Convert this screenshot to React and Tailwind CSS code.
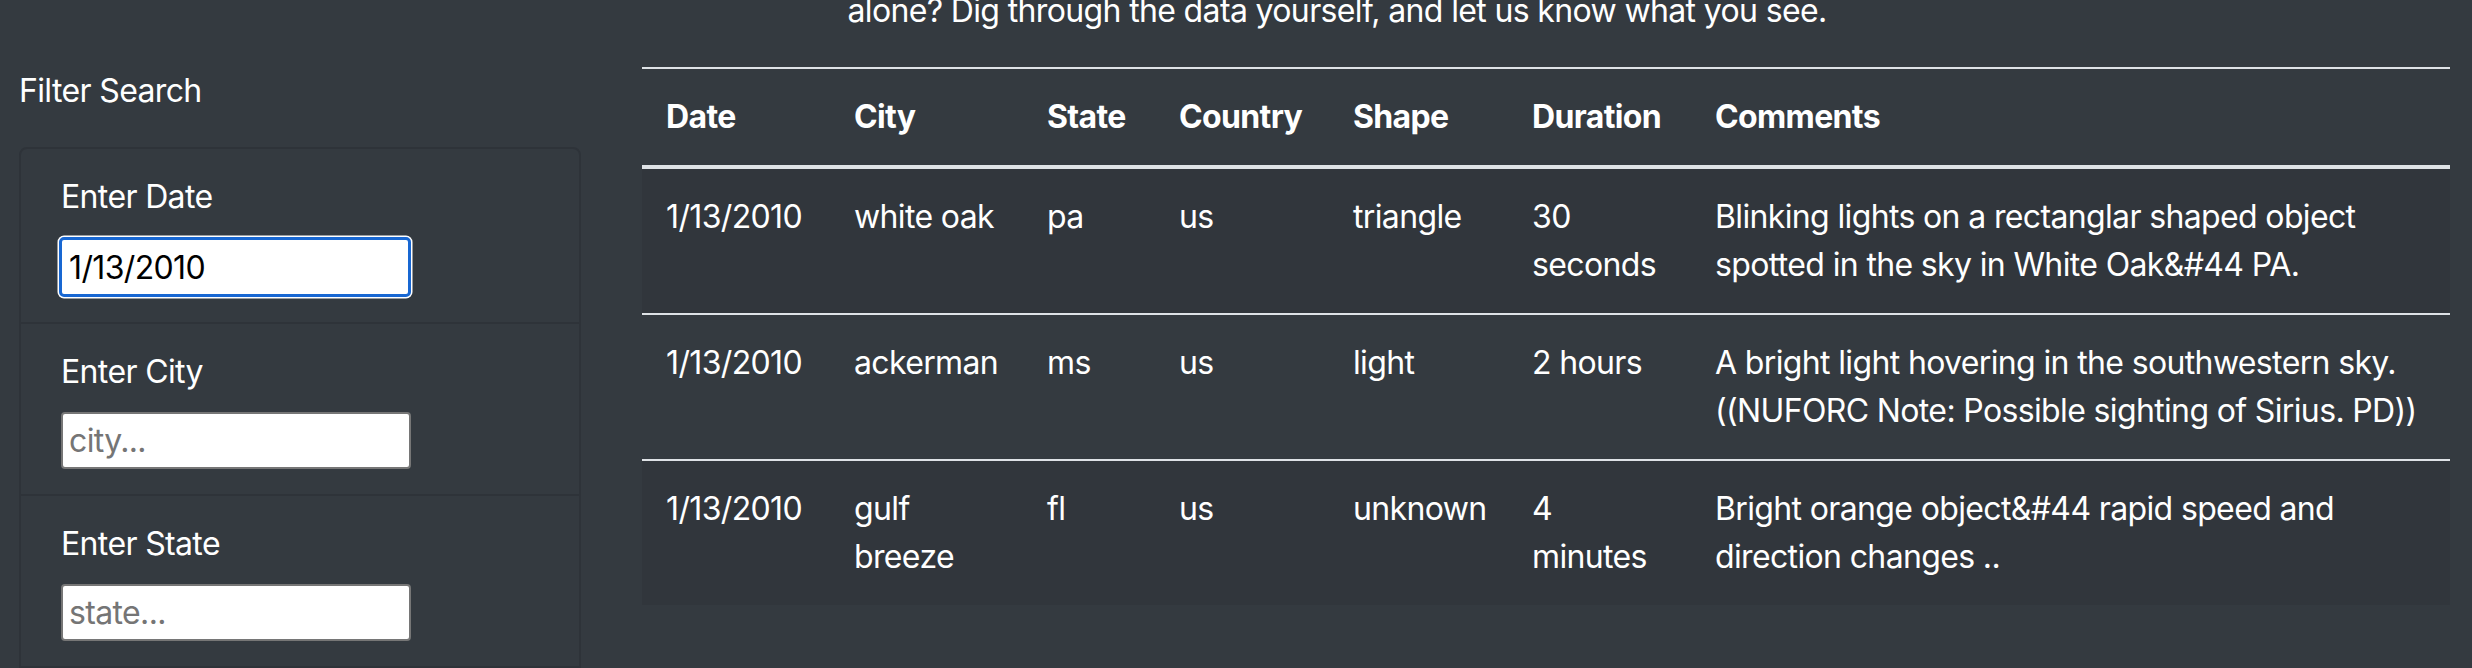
import React from 'react';

const rows = [
  {
    date: '1/13/2010',
    city: ['white oak'],
    state: 'pa',
    country: 'us',
    shape: 'triangle',
    duration: ['30', 'seconds'],
    comments: ['Blinking lights on a rectanglar shaped object', 'spotted in the sky in White Oak&#44 PA.'],
  },
  {
    date: '1/13/2010',
    city: ['ackerman'],
    state: 'ms',
    country: 'us',
    shape: 'light',
    duration: ['2 hours'],
    comments: ['A bright light hovering in the southwestern sky.', '((NUFORC Note: Possible sighting of Sirius. PD))'],
  },
  {
    date: '1/13/2010',
    city: ['gulf', 'breeze'],
    state: 'fl',
    country: 'us',
    shape: 'unknown',
    duration: ['4', 'minutes'],
    comments: ['Bright orange object&#44 rapid speed and', 'direction changes ..'],
  },
];

const filters = [
  { label: 'Enter Date', placeholder: 'date...', value: '1/13/2010', focused: true },
  { label: 'Enter City', placeholder: 'city...' },
  { label: 'Enter State', placeholder: 'state...' },
  { label: 'Enter Country', placeholder: 'country...' },
  { label: 'Enter Shape', placeholder: 'shape...' },
];

const Lines = ({ parts }) =>
  parts.map((p, i) => (
    <span key={i} className="block whitespace-nowrap">
      {p}
    </span>
  ));

const App = () => {
  return (
    <div
      className="h-[668px] overflow-hidden bg-[#343a40] text-white text-[32px] leading-[48px]"
      style={{ fontFamily: 'Inter, "Liberation Sans", sans-serif' }}
    >
      <p className="-mt-[13px] mb-8 pl-[202px] text-center tracking-[-0.02em]">
        alone? Dig through the data yourself, and let us know what you see.
      </p>

      <div className="flex pl-[19px] gap-[61px]">
        {/* sidebar */}
        <aside className="w-[562px] shrink-0">
          <div className="tracking-[-0.02em]">Filter Search</div>
          <ul className="mt-8 border-2 border-[#2e3339] rounded-[8px]">
            {filters.map((f, i) => (
              <li
                key={f.label}
                className={`px-10 pt-6 pb-[25px] ${i > 0 ? 'border-t-2 border-[#2e3339]' : ''}`}
              >
                <label className="block mb-4 tracking-[-0.02em]">{f.label}</label>
                {f.focused ? (
                  <input
                    type="text"
                    defaultValue={f.value}
                    className="block -ml-[2px] w-[352px] h-[60px] px-[7px] bg-white text-black border-[3px] border-[#1867d2] rounded-[5px] shadow-[0_0_0_1.5px_#ffffff] outline-none tracking-[-0.02em]"
                  />
                ) : (
                  <input
                    type="text"
                    placeholder={f.placeholder}
                    className="block w-[350px] h-[57px] px-[6px] bg-white text-black border-2 border-[#767676] rounded-[4px] outline-none placeholder:text-[#757575] tracking-[-0.02em]"
                  />
                )}
              </li>
            ))}
          </ul>
        </aside>

        {/* table */}
        <table className="w-[1808px] shrink-0 table-fixed border-collapse self-start tracking-[-0.02em]">
          <colgroup>
            <col className="w-[188px]" />
            <col className="w-[193px]" />
            <col className="w-[132px]" />
            <col className="w-[174px]" />
            <col className="w-[179px]" />
            <col className="w-[183px]" />
            <col />
          </colgroup>
          <thead>
            <tr>
              {['Date', 'City', 'State', 'Country', 'Shape', 'Duration', 'Comments'].map((h) => (
                <th
                  key={h}
                  className="p-6 text-left font-bold align-bottom border-t-2 border-b-4 border-[#dee2e6]"
                >
                  {h}
                </th>
              ))}
            </tr>
          </thead>
          <tbody>
            {rows.map((r, i) => (
              <tr key={i} className={i % 2 === 0 ? 'bg-[#31363c]' : ''}>
                <td className={`p-6 align-top whitespace-nowrap ${i > 0 ? 'border-t-2 border-[#dee2e6]' : ''}`}>{r.date}</td>
                <td className={`p-6 align-top ${i > 0 ? 'border-t-2 border-[#dee2e6]' : ''}`}>
                  <Lines parts={r.city} />
                </td>
                <td className={`p-6 align-top ${i > 0 ? 'border-t-2 border-[#dee2e6]' : ''}`}>{r.state}</td>
                <td className={`p-6 align-top ${i > 0 ? 'border-t-2 border-[#dee2e6]' : ''}`}>{r.country}</td>
                <td className={`p-6 align-top ${i > 0 ? 'border-t-2 border-[#dee2e6]' : ''}`}>{r.shape}</td>
                <td className={`p-6 align-top ${i > 0 ? 'border-t-2 border-[#dee2e6]' : ''}`}>
                  <Lines parts={r.duration} />
                </td>
                <td className={`p-6 align-top ${i > 0 ? 'border-t-2 border-[#dee2e6]' : ''}`}>
                  <Lines parts={r.comments} />
                </td>
              </tr>
            ))}
          </tbody>
        </table>
      </div>
    </div>
  );
};

export default App;
